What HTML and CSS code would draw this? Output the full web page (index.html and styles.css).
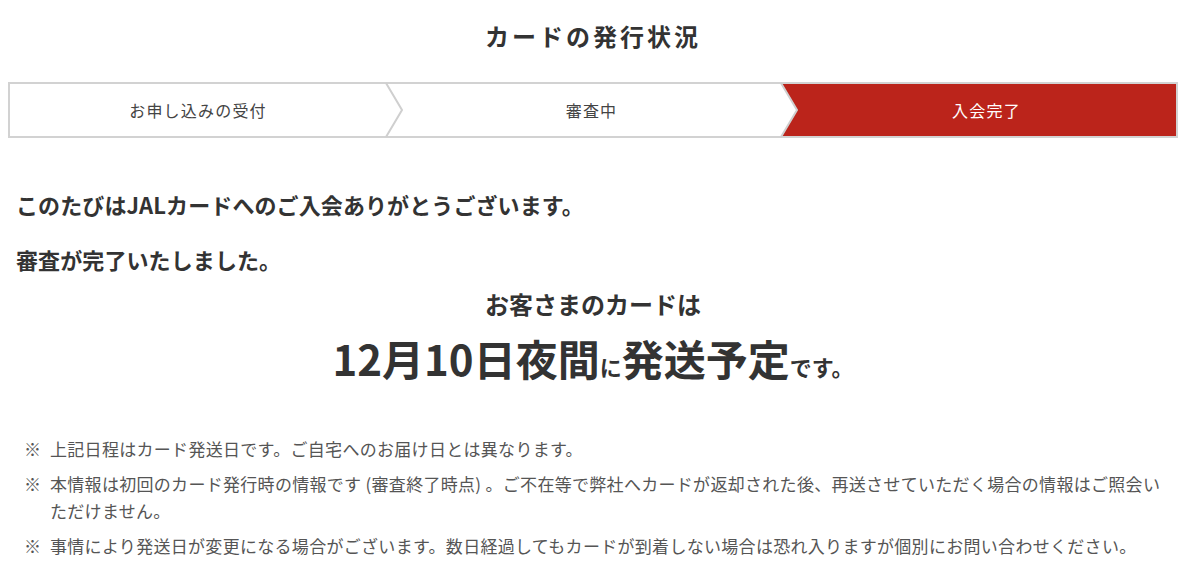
FILE: index.html
```html
<!DOCTYPE html>
<html lang="ja">
<head>
<meta charset="utf-8">
<title>カードの発行状況</title>
<link rel="stylesheet" href="styles.css">
</head>
<body>
<div class="page">
  <h1 class="title">カードの発行状況</h1>
  <ol class="steps">
    <li class="step step-first">お申し込みの受付<svg class="chev" viewBox="0 0 17 52" preserveAspectRatio="none"><polygon points="0,-1 16,26 0,53" fill="#fff"/><polyline points="0,-1 16,26 0,53" fill="none" stroke="#cfcfcf" stroke-width="2"/></svg></li>
    <li class="step step-mid">審査中<svg class="chev" viewBox="0 0 17 52" preserveAspectRatio="none"><polygon points="0,-1 16,26 0,53" fill="#fff"/><polyline points="0,-1 16,26 0,53" fill="none" stroke="#cfcfcf" stroke-width="2"/></svg></li>
    <li class="step step-current">入会完了</li>
  </ol>
  <p class="lead lead-first">このたびはJALカードへのご入会ありがとうございます。</p>
  <p class="lead">審査が完了いたしました。</p>
  <p class="sub">お客さまのカードは</p>
  <p class="date"><span class="big">12月10日夜間</span><span class="small">に</span><span class="big">発送予定</span><span class="small">です。</span></p>
  <ul class="notes">
    <li class="note"><span class="mark">※</span><span class="note-text">上記日程はカード発送日です。ご自宅へのお届け日とは異なります。</span></li>
    <li class="note"><span class="mark">※</span><span class="note-text">本情報は初回のカード発行時の情報です (審査終了時点) 。ご不在等で弊社へカードが返却された後、再送させていただく場合の情報はご照会いただけません。</span></li>
    <li class="note"><span class="mark">※</span><span class="note-text">事情により発送日が変更になる場合がございます。数日経過してもカードが到着しない場合は恐れ入りますが個別にお問い合わせください。</span></li>
  </ul>
</div>
</body>
</html>
```
FILE: styles.css
```css
* { box-sizing: border-box; }
html, body { margin: 0; padding: 0; background: #fff; }
body {
  font-family: "Noto Sans CJK JP", "Noto Sans", sans-serif;
  color: #333;
}
.page {
  width: 1170px;
  margin-left: 8px;
}
.title {
  margin: 0;
  padding-top: 18px;
  height: 82px;
  font-size: 24px;
  line-height: 36px;
  font-weight: 700;
  text-align: center;
  letter-spacing: 3px;
  color: #333;
}
.steps {
  list-style: none;
  margin: 0;
  padding: 0;
  height: 56px;
  border: 2px solid #d2d2d2;
  display: grid;
  grid-template-columns: 376px 395px 1fr;
}
.step {
  position: relative;
  display: flex;
  align-items: center;
  justify-content: center;
  font-size: 16px;
  letter-spacing: 1.2px;
  color: #444;
  background: #fff;
}
.step-first { z-index: 3; }
.step-mid { z-index: 2; padding-left: 16px; }
.step-current {
  z-index: 1;
  padding-left: 16px;
  background: #bb241b;
  color: #fff;
}
.chev {
  position: absolute;
  top: 0;
  left: 100%;
  width: 17px;
  height: 52px;
  overflow: visible;
}
.lead {
  margin: 0;
  padding-left: 8px;
  font-size: 22px;
  line-height: 32px;
  font-weight: 700;
  letter-spacing: 0.1px;
  color: #333;
}
.lead-first { margin-top: 50px; margin-bottom: 23px; }
.sub {
  margin: 12px 0 0;
  text-align: center;
  font-size: 24px;
  line-height: 34px;
  font-weight: 700;
}
.date {
  margin: 9px 0 0;
  text-align: center;
  line-height: 56px;
  font-weight: 700;
  color: #333;
}
.big { font-size: 42px; }
.small { font-size: 22px; }
.notes {
  list-style: none;
  margin: 38px 0 0;
  padding: 0 10px 0 16px;
}
.note {
  display: flex;
  font-size: 17px;
  letter-spacing: 0.3px;
  line-height: 27px;
  color: #555;
  margin-bottom: 8px;
}
.mark { flex: 0 0 26px; }
.note-text { flex: 1; }
```
